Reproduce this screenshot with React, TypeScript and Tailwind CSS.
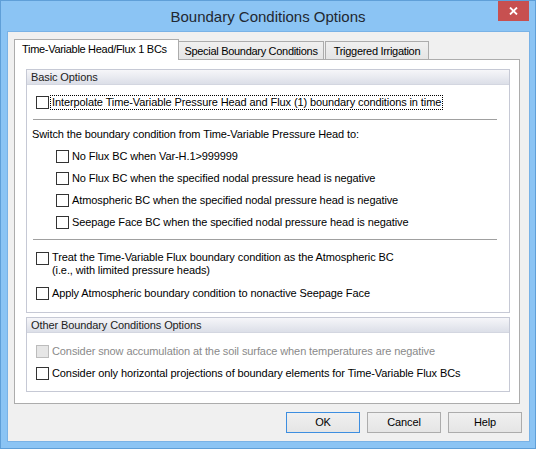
import type { ReactNode } from "react";

/* Win8-style "Boundary Conditions Options" dialog */

function Check({ disabled = false }: { disabled?: boolean }) {
  return (
    <span
      className={`block w-[13px] h-[13px] shrink-0 border ${
        disabled ? "border-[#bcbcbc] bg-[#e6e6e6]" : "border-[#333333] bg-white"
      }`}
    />
  );
}

function CheckRow({
  children,
  indent = "pl-[9px]",
  disabled = false,
}: {
  children: ReactNode;
  indent?: string;
  disabled?: boolean;
}) {
  return (
    <div className={`h-[22px] flex items-center ${indent}`}>
      <Check disabled={disabled} />
      <span className={`ml-[3px] leading-[13px] whitespace-nowrap ${disabled ? "text-[#8a8a8a]" : ""}`}>
        {children}
      </span>
    </div>
  );
}

function GroupBox({ title, children, className = "" }: { title: string; children: ReactNode; className?: string }) {
  return (
    <div className={`ml-[11px] w-[484px] border border-[#c6c9d5] flex flex-col ${className}`}>
      <div className="h-[15px] shrink-0 flex items-center pl-[4px] bg-gradient-to-b from-[#f6f6f9] to-[#dcdfe8] border-b border-[#d3d6e0] text-[#222]">
        <span className="leading-[13px]">{title}</span>
      </div>
      {children}
    </div>
  );
}

function Separator() {
  return <div className="ml-[6px] w-[464px] h-px bg-[#a0a0a0] shrink-0" />;
}

function Button({ label, primary = false }: { label: string; primary?: boolean }) {
  return (
    <button
      type="button"
      className={`w-[74px] h-[21px] flex items-center justify-center border bg-gradient-to-b from-[#f0f0f0] to-[#e5e5e5] text-black ${
        primary ? "border-[#3d8ee0]" : "border-[#acacac]"
      }`}
    >
      {label}
    </button>
  );
}

export default function App() {
  return (
    <div className="relative w-[536px] h-[449px] bg-[#8bc4f4] border border-[#5f9fd8] flex flex-col overflow-hidden font-['Liberation_Sans',Arial,sans-serif] text-[11px] tracking-[-0.1px] text-black">
      {/* Title bar */}
      <div className="h-[30px] shrink-0 flex items-center justify-center">
        <span className="text-[15px] tracking-normal text-[#222831] leading-[18px] mt-[1px]">Boundary Conditions Options</span>
      </div>
      <button
        type="button"
        aria-label="Close"
        className="absolute top-[-1px] right-[6px] w-[31px] h-[21px] bg-[#c75050] flex items-center justify-center"
      >
        <svg width="9" height="8" viewBox="0 0 9 8" aria-hidden="true">
          <path d="M1 0.5 L8 7.5 M8 0.5 L1 7.5" stroke="white" strokeWidth="1.8" />
        </svg>
      </button>

      {/* Client area */}
      <div className="ml-[6px] mr-[5px] mb-[6px] h-[411px] bg-[#f0f0f0] border border-[#79b2e6] flex flex-col pt-[7px] pl-[6px] pr-[7px]">
        {/* Tabs */}
        <div className="h-[20px] flex items-end shrink-0 tracking-[-0.3px]">
          <div className="relative z-10 -mb-px w-[165px] h-[21px] bg-white border border-b-0 border-[#acacac] flex items-center pl-[7px] pb-[1px] whitespace-nowrap">
            Time-Variable Head/Flux 1 BCs
          </div>
          <div className="w-[145px] h-[18px] border border-b-0 border-l-0 border-[#acacac] bg-gradient-to-b from-[#f0f0f0] to-[#e5e5e5] flex items-center justify-center pt-[1px] whitespace-nowrap">
            Special Boundary Conditions
          </div>
          <div className="ml-px w-[104px] h-[18px] border border-b-0 border-[#acacac] bg-gradient-to-b from-[#f0f0f0] to-[#e5e5e5] flex items-center justify-center pt-[1px] whitespace-nowrap">
            Triggered Irrigation
          </div>
        </div>

        {/* Tab page */}
        <div className="w-[506px] h-[345px] shrink-0 bg-white border border-[#acacac] flex flex-col pt-[9px]">
          <GroupBox title="Basic Options" className="h-[244px]">
            <div className="h-[11px]" />
            <div className="h-[13px] flex items-center pl-[9px]">
              <Check />
              <span className="ml-[1px] border border-dotted border-black px-[1px] leading-[13px] whitespace-nowrap">
                Interpolate Time-Variable Pressure Head and Flux (1) boundary conditions in time
              </span>
            </div>
            <div className="h-[10px]" />
            <Separator />
            <div className="h-[25px] pt-[7px] pl-[5px] leading-[15px] whitespace-nowrap">
              Switch the boundary condition from Time-Variable Pressure Head to:
            </div>
            <CheckRow indent="pl-[29px]">No Flux BC when Var-H.1&gt;999999</CheckRow>
            <CheckRow indent="pl-[29px]">No Flux BC when the specified nodal pressure head is negative</CheckRow>
            <CheckRow indent="pl-[29px]">Atmospheric BC when the specified nodal pressure head is negative</CheckRow>
            <CheckRow indent="pl-[29px]">Seepage Face BC when the specified nodal pressure head is negative</CheckRow>
            <div className="h-[6px]" />
            <Separator />
            <div className="h-[11px]" />
            <div className="flex items-start pl-[9px]">
              <div className="mt-[1px]">
                <Check />
              </div>
              <span className="ml-[3px] leading-[13px]">
                Treat the Time-Variable Flux boundary condition as the Atmospheric BC
                <br />
                (i.e., with limited pressure heads)
              </span>
            </div>
            <div className="h-[5px]" />
            <CheckRow>Apply Atmospheric boundary condition to nonactive Seepage Face</CheckRow>
          </GroupBox>

          <GroupBox title="Other Boundary Conditions Options" className="mt-[4px] h-[75px]">
            <div className="h-[7px]" />
            <CheckRow disabled>Consider snow accumulation at the soil surface when temperatures are negative</CheckRow>
            <CheckRow>Consider only horizontal projections of boundary elements for Time-Variable Flux BCs</CheckRow>
          </GroupBox>
        </div>

        {/* Buttons */}
        <div className="mt-[8px] flex justify-end gap-[7px]">
          <Button label="OK" primary />
          <Button label="Cancel" />
          <Button label="Help" />
        </div>
      </div>
    </div>
  );
}
